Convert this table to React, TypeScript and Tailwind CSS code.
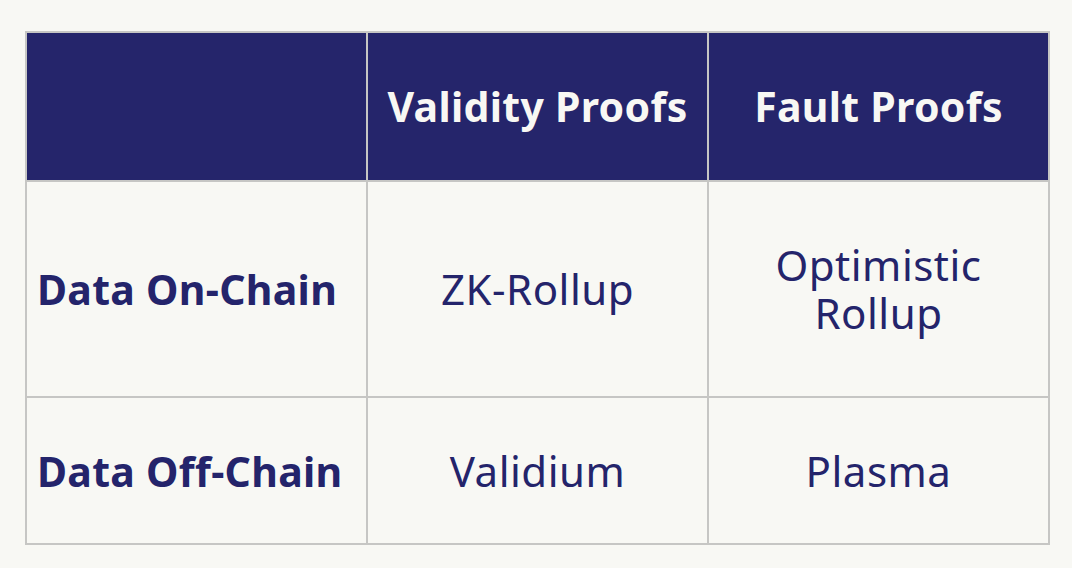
export default function App() {
  const cell = "border-2 border-[#c6c6c4] text-center align-middle";
  return (
    <div className="w-[1072px] h-[568px] bg-[#f8f8f4] pt-[31px] pl-[25px] font-['Noto_Sans',sans-serif] text-[#24246b]">
      <table className="border-collapse table-fixed w-[1024px]">
        <colgroup>
          <col className="w-[341px]" />
          <col className="w-[341px]" />
          <col className="w-[341px]" />
        </colgroup>
        <thead>
          <tr className="h-[149px] bg-[#25256b] text-[#f8f8f4] text-[41px] tracking-[0.3px] font-semibold">
            <th className={cell}></th>
            <th className={cell}>Validity Proofs</th>
            <th className={cell}>Fault Proofs</th>
          </tr>
        </thead>
        <tbody className="text-[42px] leading-[48px] tracking-[0.5px]">
          <tr className="h-[216px]">
            <td className={cell + " text-left pl-[10px] font-bold text-[41px] tracking-[0.3px]"}>Data On-Chain</td>
            <td className={cell}>ZK-Rollup</td>
            <td className={cell}>
              Optimistic
              <br />
              Rollup
            </td>
          </tr>
          <tr className="h-[147px]">
            <td className={cell + " text-left pl-[10px] font-bold text-[41px] tracking-[0.3px]"}>Data Off-Chain</td>
            <td className={cell}>Validium</td>
            <td className={cell}>Plasma</td>
          </tr>
        </tbody>
      </table>
    </div>
  );
}
